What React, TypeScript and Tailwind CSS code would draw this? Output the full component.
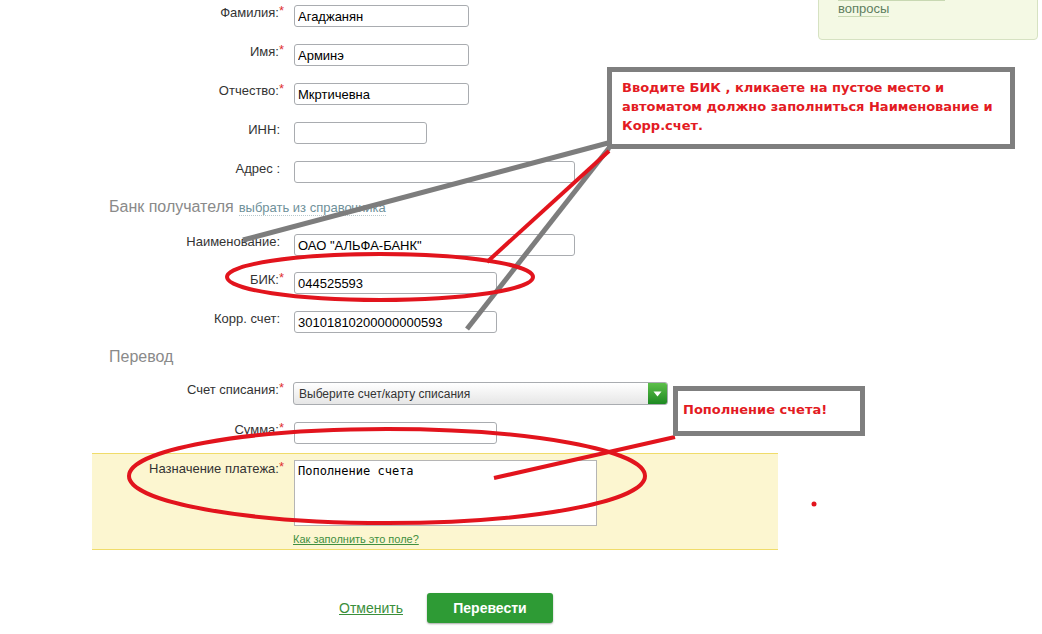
import React from "react";

const labelCls = "text-right text-[13px] leading-[16px] text-[#333]";
const inputCls =
  "h-[22px] rounded-[3px] border border-[#a9acb0] bg-white px-[3px] text-[13px] leading-[20px] text-black outline-none";

function Star() {
  return <span className="relative top-[-2px] text-[#e0312f]">*</span>;
}

function Row({
  label,
  required,
  value,
  width,
  className,
  labelWidth = 284,
}: {
  label: string;
  required?: boolean;
  value?: string;
  width: string;
  className?: string;
  labelWidth?: number;
}) {
  return (
    <div className={`flex items-start ${className ?? ""}`}>
      <div className={labelCls} style={{ width: labelWidth }}>
        {label}
        {required ? <Star /> : <span className="inline-block w-[4px]" />}
      </div>
      <input readOnly value={value ?? ""} className={`ml-[10px] ${inputCls} ${width}`} />
    </div>
  );
}

export default function App() {
  return (
    <div className="relative h-[634px] w-[1042px] overflow-hidden bg-white font-['Liberation_Sans',Arial,sans-serif]">
      <div className="flex">
        <main className="w-[818px] pt-[5px]">
          <Row label="Фамилия:" required value="Агаджанян" width="w-[175px]" className="mb-[17px]" />
          <Row label="Имя:" required value="Арминэ" width="w-[175px]" className="mb-[17px]" />
          <Row label="Отчество:" required value="Мкртичевна" width="w-[175px]" className="mb-[17px]" />
          <Row label="ИНН:" width="w-[133px]" className="mb-[17px]" />
          <Row label="Адрес :" width="w-[281px]" />

          <div className="mt-[15px] ml-[109px] flex items-baseline text-[16px] leading-[18px] text-[#8a8a8a]">
            Банк получателя
            <span className="ml-[5px] border-b border-dotted border-[#b9c9cc] text-[13px] leading-[14px] text-[#6f919a]">
              выбрать из справочника
            </span>
          </div>

          <Row label="Наименование:" value='ОАО "АЛЬФА-БАНК"' width="w-[281px]" className="mt-[18px] mb-[16px]" />
          <Row label="БИК:" required value="044525593" width="w-[203px]" className="mb-[17px]" />
          <Row label="Корр. счет:" value="30101810200000000593" width="w-[203px]" />

          <div className="mt-[15px] ml-[109px] text-[16px] leading-[18px] text-[#8a8a8a]">Перевод</div>

          <div className="mt-[16px] flex items-start">
            <div className={`${labelCls} w-[284px]`}>
              Счет списания:
              <Star />
            </div>
            <div className="ml-[9px] flex h-[23px] w-[375px] items-center overflow-hidden rounded-[3px] border border-[#a9acb0] bg-gradient-to-b from-white to-[#e6e6e6]">
              <span className="flex-1 pl-[5px] text-[12px] text-[#333]">Выберите счет/карту списания</span>
              <span className="flex h-full w-[19px] items-center justify-center bg-gradient-to-b from-[#5cbf4a] to-[#1b8a22]">
                <svg width="9" height="6" viewBox="0 0 9 6">
                  <path d="M0.5 0.5 L8.5 0.5 L4.5 5.5 Z" fill="white" />
                </svg>
              </span>
            </div>
          </div>

          <Row label="Сумма:" required width="w-[203px]" className="mt-[17px]" />

          <div className="mt-[9px] ml-[92px] w-[686px] border-y border-[#f0dc6a] bg-[#fcf6d0] pt-[6px] pb-[3px]">
            <div className="flex items-start">
              <div className={`${labelCls} w-[192px] pt-[1px]`}>
                Назначение платежа:
                <Star />
              </div>
              <textarea
                readOnly
                value="Пополнение счета"
                className="ml-[10px] h-[66px] w-[303px] resize-none border border-[#b5b5b5] bg-white px-[3px] py-[3px] font-['DejaVu_Sans_Mono',monospace] text-[12px] leading-[14px] text-black outline-none"
              />
            </div>
            <div className="mt-[7px] ml-[201px] text-[11px] leading-[13px] text-[#3f8f3f] underline">
              Как заполнить это поле?
            </div>
          </div>

          <div className="mt-[43px] ml-[339px] flex items-center">
            <span className="text-[14px] leading-[16px] text-[#3b8f3b] underline">Отменить</span>
            <button
              type="button"
              className="ml-[24px] h-[30px] w-[126px] rounded-[3px] bg-[#2e9b35] text-[14px] font-bold text-white shadow-[0_1px_2px_rgba(0,0,0,0.35)]"
            >
              Перевести
            </button>
          </div>
        </main>

        <aside className="mt-[-20px] h-[60px] w-[220px] rounded-[4px] border border-[#d6e2c2] bg-[#f4f9e4] pl-[19px] pt-[5px] text-[13px] leading-[15px] text-[#5f7f5f]">
          <div className="h-[15px] w-[107px] border-b border-[#c8d8b2]" />
          <div>
            <span className="border-b border-[#c8d8b2]">вопросы</span>
          </div>
        </aside>
      </div>

      <svg className="pointer-events-none absolute left-0 top-0" width="1042" height="634">
        <line x1="608" y1="143" x2="243" y2="240" stroke="#7d7d7d" strokeWidth="5" />
        <line x1="609" y1="148" x2="467" y2="329" stroke="#7d7d7d" strokeWidth="5" />
        <line x1="609" y1="151" x2="487" y2="262" stroke="#e2141d" strokeWidth="4" />
        <ellipse cx="380" cy="277" rx="153" ry="23" fill="none" stroke="#e2141d" strokeWidth="4" />
        <ellipse cx="387" cy="476" rx="258" ry="47" fill="none" stroke="#e2141d" strokeWidth="4" />
        <line x1="675" y1="437" x2="494" y2="478" stroke="#e2141d" strokeWidth="4" />
        <circle cx="814" cy="504" r="2.5" fill="#e2141d" />
      </svg>

      <div className="absolute left-[607px] top-[67px] h-[82px] w-[408px] border-[5px] border-[#7f7f7f] bg-white pl-[10px] pt-[6px] font-['DejaVu_Sans',Verdana,sans-serif] text-[13px] font-bold leading-[19px] text-[#e31b23]">
        Вводите БИК , кликаете на пустое место и
        <br />
        автоматом должно заполниться Наименование и
        <br />
        Корр.счет.
      </div>

      <div className="absolute left-[673px] top-[386px] h-[50px] w-[192px] border-[5px] border-[#7f7f7f] bg-white pl-[5px] pt-[12px] font-['DejaVu_Sans',Verdana,sans-serif] text-[13px] font-bold leading-[14px] text-[#e31b23]">
        Пополнение счета!
      </div>
    </div>
  );
}
